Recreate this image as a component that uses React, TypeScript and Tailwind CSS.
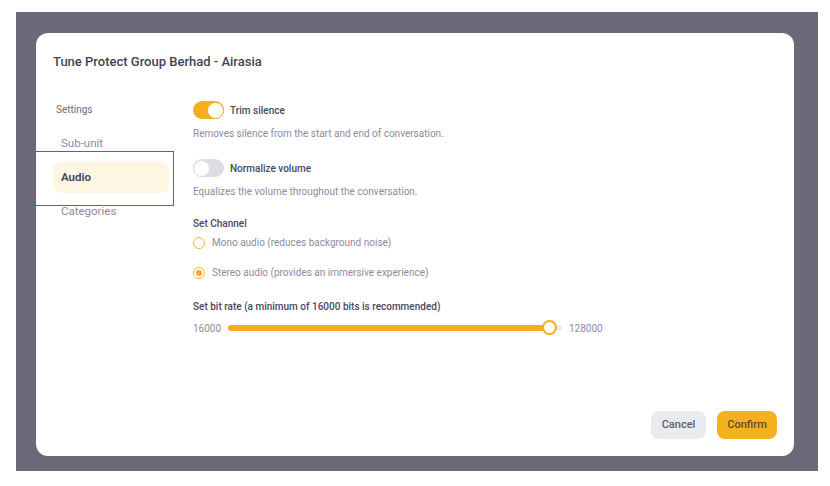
import React from "react";

function Toggle({ on }: { on: boolean }) {
  return (
    <div
      className={`relative w-[31px] h-[18px] rounded-full flex items-center ${
        on ? "bg-[#f5ae1e] justify-end" : "bg-[#dddce2] justify-start"
      }`}
    >
      <div
        className={`w-[17px] h-[17px] rounded-full bg-white border ${
          on ? "border-[#f5ae1e]" : "border-[#dddce2]"
        }`}
      />
    </div>
  );
}

function Radio({ checked, label }: { checked: boolean; label: string }) {
  return (
    <div className="flex items-center h-[14px]">
      <div className="w-[12px] h-[12px] rounded-full border border-[#f5b630] flex items-center justify-center bg-white">
        {checked && <div className="w-[6px] h-[6px] rounded-full bg-[#f5ae1e]" />}
      </div>
      <span className="ml-[7px] text-[10px] leading-[14px] text-[#8e8b9d]">{label}</span>
    </div>
  );
}

export default function App() {
  return (
    <div
      className="relative w-[830px] h-[486px] bg-white pt-[12px] pl-[16px]"
      style={{ fontFamily: "Roboto, 'Liberation Sans', sans-serif" }}
    >
      <div className="w-[802px] h-[459px] bg-[#6b6878] pl-[20px] pt-[21px]">
        <div className="w-[758px] h-[423px] rounded-[12px] bg-white flex flex-col">
          <div className="pt-[21px] pl-[17px]">
            <div className="text-[13px] leading-[16px] font-medium text-[#45425a]">
              Tune Protect Group Berhad - Airasia
            </div>
          </div>
          <div className="flex mt-[31px] pl-[17px]">
            <div className="w-[140px] flex flex-col">
              <div className="h-[17px] pl-[3px] text-[10px] leading-[17px] text-[#6d6a80]">Settings</div>
              <div className="mt-[10px] flex flex-col gap-[3px]">
                <div className="w-[116px] h-[31px] rounded-[8px] px-[8px] flex items-center text-[11.5px] text-[#8e8b9d]">
                  Sub-unit
                </div>
                <div className="w-[116px] h-[31px] rounded-[8px] px-[8px] flex items-center text-[11.5px] font-semibold text-[#45425a] bg-[#fef6e3]">
                  Audio
                </div>
                <div className="w-[116px] h-[31px] rounded-[8px] px-[8px] flex items-center text-[11.5px] text-[#8e8b9d]">
                  Categories
                </div>
              </div>
            </div>
            <div className="flex flex-col">
              <div className="flex items-center h-[18px]">
                <Toggle on={true} />
                <span className="ml-[6px] text-[10px] font-medium text-[#4a4760]">Trim silence</span>
              </div>
              <div className="mt-[8px] text-[10px] leading-[14px] text-[#8e8b9d]">
                Removes silence from the start and end of conversation.
              </div>
              <div className="mt-[18px] flex items-center h-[18px]">
                <Toggle on={false} />
                <span className="ml-[6px] text-[10px] font-medium text-[#4a4760]">Normalize volume</span>
              </div>
              <div className="mt-[8px] text-[10px] leading-[14px] text-[#8e8b9d]">
                Equalizes the volume throughout the conversation.
              </div>
              <div className="mt-[18px] text-[10px] leading-[14px] font-medium text-[#4a4760]">Set Channel</div>
              <div className="mt-[5px]">
                <Radio checked={false} label="Mono audio (reduces background noise)" />
              </div>
              <div className="mt-[16px]">
                <Radio checked={true} label="Stereo audio (provides an immersive experience)" />
              </div>
              <div className="mt-[20px] text-[10px] leading-[14px] font-medium text-[#4a4760]">
                Set bit rate (a minimum of 16000 bits is recommended)
              </div>
              <div className="mt-[6px] flex items-center h-[16px]">
                <span className="w-[28px] text-[10px] text-[#8e8b9d]">16000</span>
                <div className="ml-[7px] relative w-[334px] h-[6px] rounded-full bg-[#ebeaee]">
                  <div className="absolute left-0 top-0 h-[6px] w-[322px] rounded-full bg-[#f5ae1e]" />
                  <div className="absolute left-[314px] top-[-5px] w-[15px] h-[15px] rounded-full bg-white border-2 border-[#f5ae1e]" />
                </div>
                <span className="ml-[7px] text-[10px] text-[#8e8b9d]">128000</span>
              </div>
            </div>
          </div>
          <div className="mt-auto flex justify-end gap-[11px] pr-[17px] pb-[17px]">
            <button className="w-[55px] h-[28px] rounded-[8px] bg-[#ebeaee] text-[11px] font-medium text-[#5f5c72]">
              Cancel
            </button>
            <button className="w-[60px] h-[28px] rounded-[8px] bg-[#f5b01f] text-[11px] font-medium text-[#5f4c2a]">
              Confirm
            </button>
          </div>
        </div>
      </div>
      <div className="absolute left-[35px] top-[151px] w-[139px] h-[55px] ring-1 ring-inset ring-[#9b30e8]" />
    </div>
  );
}
